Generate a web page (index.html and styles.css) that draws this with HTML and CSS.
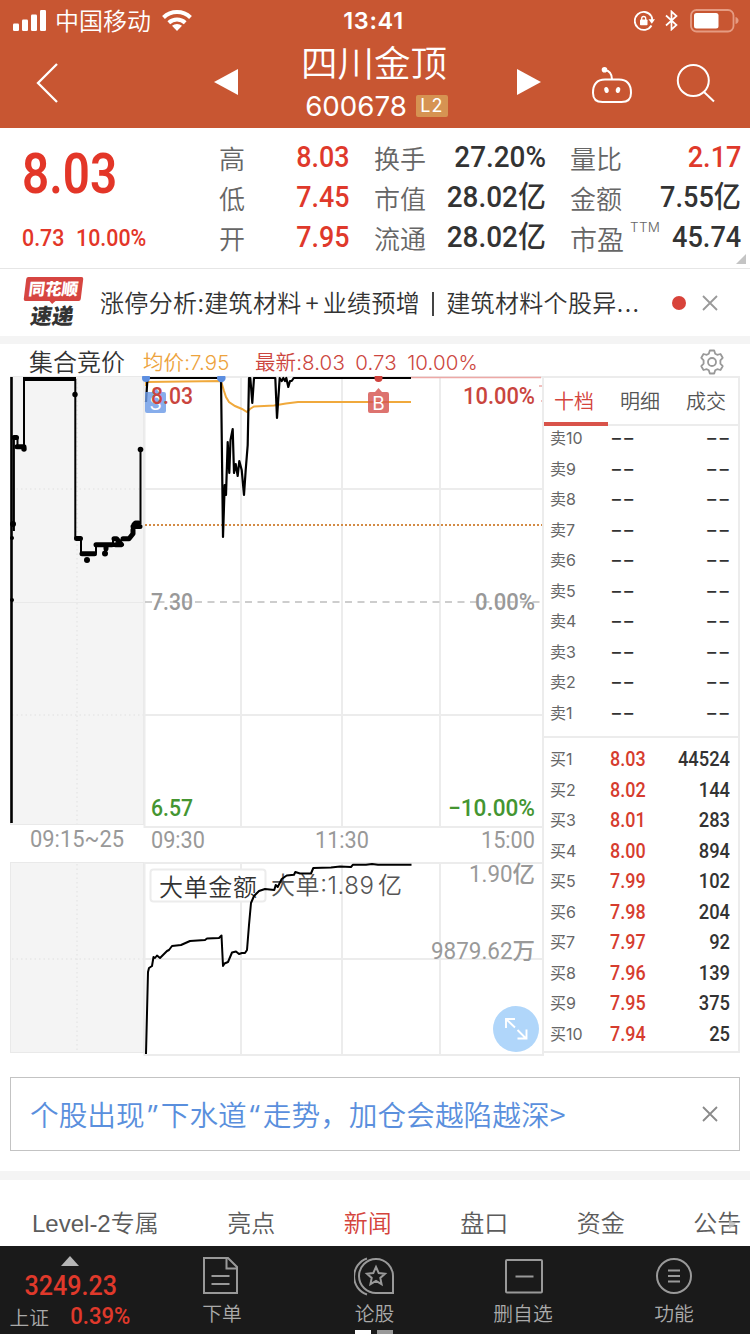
FILE: index.html
```html
<!DOCTYPE html>
<html lang="zh-CN">
<head>
<meta charset="utf-8">
<title>四川金顶 600678</title>
<link rel="stylesheet" href="styles.css">
</head>
<body>
<div class="app">
  <header class="top">
    <div class="status">
      <div class="carrier">
        <svg class="signal" width="34" height="22" viewBox="0 0 34 22" fill="#fff"><rect x="0" y="13.5" width="6" height="7.5" rx="1.2"/><rect x="9" y="9.5" width="6" height="11.500" rx="1.200"/><rect x="18" y="4.500" width="6" height="16.500" rx="1.200"/><rect x="27" y="0" width="6" height="21" rx="1.200"/></svg>
        <span class="operator">中国移动</span>
        <svg class="wifi" width="30" height="23" viewBox="0 0 30 23" fill="none" stroke="#fff" stroke-width="4"><path d="M1.500 8.500a19.500 19.500 0 0 1 27 0"/><path d="M6.800 13.700a12 12 0 0 1 16.400 0"/><path d="M10 16.800a7.500 7.500 0 0 1 10 0L15 22z" fill="#fff" stroke="none"/></svg>
      </div>
      <span class="clock">13:41</span>
      <div class="indicators">
        <svg width="22" height="20" viewBox="0 0 22 20" fill="none" stroke="#fff" stroke-width="1.800"><path d="M17.300 5A9 9 0 1 0 17.500 14.500"/><path d="M14.500 8.300h6.500l-3.200 4.500z" fill="#fff" stroke="none"/><path d="M17.300 5q1 2 .8 4"/><rect x="6" y="8.500" width="7.500" height="5.800" rx=".8" fill="#fff" stroke="none"/><path d="M7.700 9V7.500a2 2 0 0 1 4 0V9" stroke-width="1.300"/></svg>
        <svg width="13" height="21" viewBox="0 0 13 21" fill="none" stroke="#fff" stroke-width="1.700"><path d="M1 5.500l10.500 9.500L6.500 19.500V1.500l5 4.500L1 15.500"/></svg>
        <svg class="battery" width="49" height="24" viewBox="0 0 49 24" fill="none"><rect x="1" y="1" width="42.500" height="21.500" rx="5.500" stroke="#e59b82" stroke-width="1.800"/><rect x="4" y="4" width="24.500" height="15.500" rx="2.500" fill="#fff"/><path d="M45.500 8v7q3-1 3-3.500t-3-3.500z" fill="#e59b82"/></svg>
      </div>
    </div>
    <nav class="titlebar">
      <svg class="back" width="24" height="42" viewBox="0 0 24 42" fill="none" stroke="#fff" stroke-width="2.300"><path d="M22 2L3 21l19 19"/></svg>
      <svg class="prev" width="24" height="26" viewBox="0 0 24 26" fill="#fff"><path d="M0 13L24 0v26z"/></svg>
      <div class="title">
        <div class="name">四川金顶</div>
        <div class="code"><span>600678</span><i class="level">L2</i></div>
      </div>
      <svg class="next" width="24" height="26" viewBox="0 0 24 26" fill="#fff"><path d="M24 13L0 0v26z"/></svg>
      <svg class="robot" width="42" height="38" viewBox="0 0 42 38" fill="none" stroke="#fff" stroke-width="2"><path d="M14 13.500h14q12 0 12 13.500q0 9-9.500 9h-19Q2 36 2 27q0-13.500 12-13.500z"/><path d="M21 13.500q0-8.500-7.500-9.500"/><circle cx="13.500" cy="3.800" r="2.800" fill="#fff" stroke="none"/><ellipse cx="15.500" cy="24" rx="2.200" ry="3" fill="#fff" stroke="none" transform="rotate(-12 15.500 24)"/><ellipse cx="27" cy="24" rx="2.200" ry="3" fill="#fff" stroke="none" transform="rotate(12 27 24)"/></svg>
      <svg class="search" width="40" height="40" viewBox="0 0 40 40" fill="none" stroke="#fff" stroke-width="2"><circle cx="17.300" cy="17.500" r="15.500"/><path d="M28 29l10 9.500"/></svg>
    </nav>
  </header>

  <section class="quote">
    <div class="price">
      <div class="last"><b class="din">8.03</b></div>
      <div class="change"><b class="din">0.73</b><b class="din">10.00%</b></div>
    </div>
    <dl class="stats first">
      <dt>高</dt><dd class="red"><b class="din">8.03</b></dd>
      <dt>低</dt><dd class="red"><b class="din">7.45</b></dd>
      <dt>开</dt><dd class="red"><b class="din">7.95</b></dd>
    </dl>
    <dl class="stats second">
      <dt>换手</dt><dd><b class="din">27.20%</b></dd>
      <dt>市值</dt><dd><b class="din">28.02亿</b></dd>
      <dt>流通</dt><dd><b class="din">28.02亿</b></dd>
    </dl>
    <dl class="stats third">
      <dt>量比</dt><dd class="red"><b class="din">2.17</b></dd>
      <dt>金额</dt><dd><b class="din">7.55亿</b></dd>
      <dt class="pe">市盈<sup>TTM</sup></dt><dd><b class="din">45.74</b></dd>
    </dl>
    <i class="corner"></i>
  </section>

  <section class="notice">
    <div class="brand"><span class="bubble">同花顺</span><span class="express">速递</span></div>
    <p>涨停分析:建筑材料<span class="plus">+</span>业绩预增<span class="bar"></span>建筑材料个股异<span class="dots">...</span></p>
    <i class="unread"></i>
    <svg class="close" width="16" height="16" viewBox="0 0 16 16" stroke="#999" stroke-width="1.800"><path d="M1 1l14 14M15 1L1 15"/></svg>
  </section>

  <section class="market">
    <div class="legend">
      <span class="auction">集合竞价</span>
      <span class="avg">均价:7.95</span>
      <span class="latest">最新:8.03&ensp;0.73&ensp;10.00%</span>
      <svg class="gear" width="26" height="26" viewBox="0 0 26 26" fill="none" stroke="#999" stroke-width="1.800"><path d="M10.800 1.500h4.400l1 3.200 2 1.100 3.300-.8 2.200 3.800-2.300 2.500v3.400l2.300 2.500-2.200 3.800-3.300-.8-2 1.100-1 3.200h-4.400l-1-3.200-2-1.100-3.300.8-2.200-3.800 2.300-2.500v-3.400L2.300 8.800 4.500 5l3.300.8 2-1.100z" stroke-linejoin="round"/><circle cx="13" cy="13" r="4"/></svg>
    </div>
    <div class="panels">
      <svg class="chart" width="534" height="680" viewBox="10 376 534 680">
        <g fill="#f4f4f4" stroke="#e9e9e9"><rect x="10.500" y="376.500" width="133" height="448"/><rect x="10.500" y="862.500" width="133" height="190"/></g>
        <g stroke="#e6e6e6" stroke-width="1.500" stroke-dasharray="1.500 3"><path d="M12 489h131M12 715h131M12 959h131M77 378v446M77 864v188"/></g>
        <path d="M12 602.500h131" stroke="#e9e9e9"/>
        <g stroke="#ececec" stroke-width="2" fill="none"><path d="M144 377h400M144 489h400M144 715h400M144 827h400M144 863h400M144 959h400M144 1055h400M144.500 376v452M241 376v451M342 376v451M440 376v451M144.500 863v193M241 863v192M342 863v192M440 863v192M543 376v452M543 862v193"/></g>
        <path d="M145 602h398" stroke="#bdbdbd" stroke-width="1.500" stroke-dasharray="7 5.500"/>
        <path d="M145 525h398" stroke="#d38b45" stroke-width="1.800" stroke-dasharray="2 2"/>
        <g class="ink">
          <path d="M11.500 377v446" stroke-width="2.600"/><path d="M13.800 437v94" stroke-width="2.200"/>
          <path d="M17.500 437v9M24 449v-70M75.300 379v159M81 538v15M96 553v-9M105 545v8M113 545v-6M140.500 524v-74" stroke-width="2"/>
          <path d="M23 379h53" stroke-width="4"/>
          <path d="M14 437.500h2.500M17 446.700h7M76.500 538.500h4M82 553.700h12.500M96 544.700h16M106 544.700v4M114 538.700h2.500l5 6h-6M123 538.700h6l4-5v-4M134 524.500l1.500-1.500h3M133 526.500h7" stroke-width="5" stroke-linecap="round" stroke-linejoin="round"/>
        </g>
        <g fill="#000"><circle cx="24" cy="449" r="2.700"/><circle cx="75" cy="394.500" r="2.700"/><circle cx="87" cy="560" r="3"/><circle cx="105" cy="553.500" r="3"/><circle cx="140.500" cy="449.500" r="2.800"/><circle cx="13" cy="524" r="3"/><circle cx="12" cy="538" r="2"/><circle cx="12" cy="600" r="2"/></g>
        <path d="M146 386V382l75-1 3 10 2 6 3 5 6 4 7 3 5 3 3-3 4-2.500 20-1 12-2 12-1.500H411" stroke="#f0a93c" stroke-width="2" fill="none"/>
        <path d="M411 377.500h130M539 386h5M541 401h3" stroke="#eda9a6" stroke-width="1.500"/>
        <path class="ink" stroke-width="2.200" stroke-linejoin="round" d="M146 402L147.500 378H221L223 537 224.700 485 226 495 227.700 442 229.300 473 230.500 440 232.700 429 234 473 235.700 464 237.700 476 239.300 461 241.700 470 244 495 245.700 470 247.700 445 249 378H250.300L252.300 403 254 378H275.300L277 418 279.700 378 281.700 381 283.300 378 285 381 286.300 378 288.300 387 290 381H291.700L293.700 378H411"/>
        <path d="M145 392h7l3.500-4 3.500 4h5q2 0 2 2v17q0 2-2 2H147q-2 0-2-2z" fill="#6c9be6" opacity=".82"/>
        <path d="M370 392h5l3.500-4 3.500 4h5q2 0 2 2v17q0 2-2 2H370q-2 0-2-2v-17q0-2 2-2z" fill="#d6544f" opacity=".82"/>
        <g class="flag"><text x="155.500" y="410" text-anchor="middle">S</text><text x="378.500" y="410" text-anchor="middle">B</text></g>
        <circle cx="146" cy="378" r="4" fill="#5c8ee0"/><circle cx="221.300" cy="378" r="4.300" fill="#5c8ee0"/><circle cx="378.500" cy="378" r="4" fill="#cf423d"/>
        <g class="axis">
          <g fill="#c9453e"><text x="151" y="404" textLength="42" lengthAdjust="spacingAndGlyphs">8.03</text><text x="463" y="404" textLength="72" lengthAdjust="spacingAndGlyphs">10.00%</text></g>
          <g fill="#449531"><text x="151" y="816" textLength="42" lengthAdjust="spacingAndGlyphs">6.57</text><text x="448" y="816" textLength="87" lengthAdjust="spacingAndGlyphs">−10.00%</text></g>
          <g fill="#999"><text x="151" y="610" textLength="42" lengthAdjust="spacingAndGlyphs">7.30</text><text x="475" y="610" textLength="60" lengthAdjust="spacingAndGlyphs">0.00%</text></g>
          <g fill="#999" class="thin"><text x="30" y="847" textLength="94" lengthAdjust="spacingAndGlyphs">09:15~25</text><text x="151" y="848" textLength="54" lengthAdjust="spacingAndGlyphs">09:30</text><text x="315" y="848" textLength="54" lengthAdjust="spacingAndGlyphs">11:30</text><text x="481" y="848" textLength="54" lengthAdjust="spacingAndGlyphs">15:00</text><text x="469" y="882" textLength="66" lengthAdjust="spacingAndGlyphs">1.90亿</text><text x="431" y="959" textLength="104" lengthAdjust="spacingAndGlyphs">9879.62万</text></g>
        </g>
        <rect x="150.500" y="869.500" width="115" height="32" rx="3" fill="#fff" stroke="#ececec" stroke-width="2"/>
        <text class="label" x="159" y="895.500" textLength="98">大单金额</text>
        <text class="label soft" x="271" y="893.500" textLength="103">大单:1.89</text>
        <text class="label soft" x="378" y="893.500">亿</text>
        <path class="ink" stroke-width="2" stroke-linejoin="round" d="M146 1054L148 972 149 968 152 966 153.500 957 155 958 157 955.500 160 958 163 955 167 951 169 950 172 946 181 945 190 941 205 940 207 938.500 219 938 221.500 935.500 223 966 224.500 963.500 228 962 232 952.500 236 951.500 239 954 242 953 245 953 247 950 249 925 251 903 254 896 259 891 265 889 274.300 890 275.700 885 277.700 887 281.700 879 286.700 875.500 294 874.700 295.300 872 300 873.500H311L313.300 868 331 867.500 340 866.500 351 867 353 864.700H366L372 864 378 864.700H411.500"/>
        <circle cx="516" cy="1029" r="23" fill="#b0d6fa"/>
        <path d="M506 1028v-9h9M506 1019l9 8.500M517.500 1030l8.500 8.500M526.500 1029.500v9h-9" fill="none" stroke="#fff" stroke-width="1.900"/>
      </svg>
      <div class="book">
        <div class="booktabs"><span class="on">十档</span><span>明细</span><span>成交</span></div>
        <div class="orders sell">
          <div class="row"><span>卖10</span><b class="none">--</b><b class="none">--</b></div>
          <div class="row"><span>卖9</span><b class="none">--</b><b class="none">--</b></div>
          <div class="row"><span>卖8</span><b class="none">--</b><b class="none">--</b></div>
          <div class="row"><span>卖7</span><b class="none">--</b><b class="none">--</b></div>
          <div class="row"><span>卖6</span><b class="none">--</b><b class="none">--</b></div>
          <div class="row"><span>卖5</span><b class="none">--</b><b class="none">--</b></div>
          <div class="row"><span>卖4</span><b class="none">--</b><b class="none">--</b></div>
          <div class="row"><span>卖3</span><b class="none">--</b><b class="none">--</b></div>
          <div class="row"><span>卖2</span><b class="none">--</b><b class="none">--</b></div>
          <div class="row"><span>卖1</span><b class="none">--</b><b class="none">--</b></div>
        </div>
        <div class="orders buy">
          <div class="row"><span>买1</span><b class="bid">8.03</b><b>44524</b></div>
          <div class="row"><span>买2</span><b class="bid">8.02</b><b>144</b></div>
          <div class="row"><span>买3</span><b class="bid">8.01</b><b>283</b></div>
          <div class="row"><span>买4</span><b class="bid">8.00</b><b>894</b></div>
          <div class="row"><span>买5</span><b class="bid">7.99</b><b>102</b></div>
          <div class="row"><span>买6</span><b class="bid">7.98</b><b>204</b></div>
          <div class="row"><span>买7</span><b class="bid">7.97</b><b>92</b></div>
          <div class="row"><span>买8</span><b class="bid">7.96</b><b>139</b></div>
          <div class="row"><span>买9</span><b class="bid">7.95</b><b>375</b></div>
          <div class="row"><span>买10</span><b class="bid">7.94</b><b>25</b></div>
        </div>
      </div>
    </div>
  </section>

  <section class="promo">
    <p>个股出现<span class="mark">”</span>下水道<span class="mark">“</span>走势，加仓会越陷越深&gt;</p>
    <svg width="16" height="16" viewBox="0 0 16 16" stroke="#8a8a8a" stroke-width="1.800"><path d="M1 1l14 14M15 1L1 15"/></svg>
  </section>

  <nav class="news">
    <span>Level-2专属</span><span>亮点</span><span class="on">新闻</span><span>盘口</span><span>资金</span><span class="more">公告</span>
  </nav>

  <footer class="dock">
    <div class="index"><i class="up"></i><b class="points">3249.23</b><div class="sub"><span>上证</span><b>0.39%</b></div></div>
    <div class="tab"><svg class="doc" width="40" height="40" viewBox="0 0 40 40"><path d="M3 2h24l9 9v26H3zM25.500 2v10.500h10M10.500 20h18M10.500 28h18"/></svg><span>下单</span></div>
    <div class="tab forum"><svg width="42" height="40" viewBox="0 0 42 40"><path d="M39 37H22.500A17 17 0 1 1 39 20.500zM13 2.500a19 19 0 0 0 0 36"/><path d="M22 11l2.700 6 6.300.7-4.700 4.200 1.300 6.300-5.600-3.200-5.600 3.200 1.300-6.300-4.700-4.200 6.300-.7z"/></svg><span>论股</span></div>
    <div class="tab"><svg width="40" height="40" viewBox="0 0 40 40"><rect x="3" y="4" width="36" height="32.500" rx="1"/><path d="M12.500 20.500h18"/></svg><span>删自选</span></div>
    <div class="tab"><svg width="40" height="40" viewBox="0 0 40 40"><circle cx="20" cy="20" r="17"/><path d="M14 14.500h12M14 20h12M14 25.500h12"/></svg><span>功能</span></div>
    <div class="pager"><i></i><i></i></div>
  </footer>
</div>
</body>
</html>
```
FILE: styles.css
```css
* { box-sizing: border-box; }
body { margin: 0; background: #fff; color: #333; font-family: Inter, "Noto Sans CJK SC", sans-serif; }
p, dl, dd { margin: 0; }
b, i, em { font-style: normal; font-weight: 500; }
svg { display: block; flex: none; }
.app { width: 750px; height: 1334px; display: flex; flex-direction: column; overflow: hidden; position: relative; }
.din { display: inline-block; font-family: Roboto, "Noto Sans CJK SC", sans-serif; transform: scaleX(.92); transform-origin: left center; white-space: nowrap; }
.red { color: #df392b; }

/* header */
.top { height: 128px; background: #c85632; color: #fff; }
.status { height: 40px; display: grid; grid-template-columns: 1fr auto 1fr; align-items: center; padding: 0 11px 0 13px; }
.carrier { display: flex; align-items: center; }
.operator { margin: -2px 0 0 8px; font: 350 24px/36px "Noto Sans CJK SC", sans-serif; }
.wifi { margin-left: 11px; }
.clock { margin: 1px 5px 0 0; font-size: 23.500px; font-weight: 600; line-height: 40px; letter-spacing: .7px; }
.indicators { display: flex; align-items: center; justify-content: flex-end; gap: 11px; }
.indicators svg:first-child { margin-right: -2px; }
.battery { margin-left: 1px; }
.titlebar { display: flex; height: 88px; align-items: flex-start; }
.back { margin: 22px 0 0 35px; }
.prev { margin: 29px 0 0 155px; }
.title { width: 280px; display: flex; flex-direction: column; align-items: center; }
.name { margin: 0 8px 0 0; font: 350 36.500px/44px "Noto Sans CJK SC", sans-serif; }
.code { display: flex; align-items: center; gap: 9px; height: 44px; margin-right: 3px; font-size: 27.700px; }
.level { width: 32px; height: 22px; border-radius: 2px; background: #d69352; font-size: 18px; font-weight: 400; line-height: 22px; text-align: center; letter-spacing: 1px; }
.next { margin: 29px 0 0 -1px; }
.robot { margin: 26px 0 0 50px; }
.search { margin: 23px 0 0 43px; }

/* quote */
.quote { height: 141px; border-bottom: 1px solid #e6e6e6; display: flex; position: relative; padding-top: 9px; }
.price { width: 219px; padding-left: 22px; color: #e33628; }
.last { height: 76px; font-size: 55px; line-height: 72px; }
.last .din { transform: scaleX(.865); font-weight: 600; }
.change { display: flex; font-size: 23.500px; line-height: 50px; }
.change .din { width: 54px; transform: scaleX(.91); }
.stats { display: grid; grid-template-columns: auto auto; justify-content: space-between; grid-auto-rows: 40px; line-height: 38px; }
.stats dt { color: #666; font: 350 26px/41px "Noto Sans CJK SC", sans-serif; white-space: nowrap; }
.stats dt.pe { font-size: 27px; line-height: 44px; }
.stats dd { font-size: 29.500px; text-align: right; }
.stats dd .din { transform-origin: right center; }
.first .din { transform: scaleX(.91); }
.second .din { transform: scaleX(.945); }
.first { width: 130px; }
.second { width: 172px; margin-left: 25px; }
.third { width: 171px; margin-left: 24px; grid-template-columns: 54px 117px; }
.stats sup { font: 300 13.500px/14px Inter, sans-serif; letter-spacing: .3px; vertical-align: 18px; margin-left: 6px; }
.corner { position: absolute; right: 4px; bottom: 4px; border-left: 10px solid transparent; border-bottom: 10px solid #c4c4c4; }

/* notice */
.notice { height: 75px; border-bottom: 8px solid #f4f4f4; display: flex; align-items: center; padding-left: 24px; }
.brand { width: 60px; height: 52px; margin-top: -1px; }
.bubble { display: block; height: 24px; margin: 1px 2px 0 1px; border-radius: 2px; background: #d64541; color: #fff; transform: skewX(-7deg); text-align: center; font: 900 16.500px/23px "Noto Sans CJK SC", sans-serif; }
.bubble::after { content: ""; display: block; width: 0; margin: 0 auto; border: 4px solid transparent; border-top-color: #d64541; border-bottom: 0; }
.express { display: block; padding-left: 7px; font: 900 21.500px/27px "Noto Sans CJK SC", sans-serif; transform: skewX(-9deg); }
.notice p { width: 560px; margin: -2px 0 0 16px; font: 350 24px/36px "Noto Sans CJK SC", sans-serif; letter-spacing: .36px; white-space: nowrap; }
.plus { display: inline-block; width: 21px; text-align: center; }
.bar { display: inline-block; width: 2px; height: 24px; margin: 0 12px 0 12px; background: #444; vertical-align: -4px; }
.dots { letter-spacing: 1.500px; }
.unread { width: 14px; height: 14px; margin-left: 12px; border-radius: 50%; background: #d8433a; }
.close { margin-left: 16px; }

/* market */
.legend { height: 32px; display: flex; align-items: center; padding: 4px 25px 0 0; line-height: 32px; font-size: 20.500px; font-weight: 400; white-space: nowrap; }
.auction, .avg, .latest { padding-top: 2px; }
.auction { width: 114px; padding-left: 29px; box-sizing: content-box; font-size: 24px; font-weight: 350; }
.avg { width: 112px; color: #eda33d; }
.latest { color: #cc4640; }
.legend .avg, .legend .latest { font-family: Inter, "Noto Sans CJK SC", sans-serif; font-weight: 350; letter-spacing: .1px; }
.gear { margin-left: auto; }
.panels { display: flex; height: 681px; }
.chart { margin-left: 10px; }
.ink { fill: none; stroke: #000; }
.axis { font: 500 23px Roboto, "Noto Sans CJK SC", sans-serif; }
.thin { font-weight: 450; }
.flag { font: 400 19px Inter, sans-serif; fill: #fff; }
.label { font: 350 24px Inter, "Noto Sans CJK SC", sans-serif; fill: #333; }
.soft { fill: #555; }
.book { width: 198px; height: 677px; margin-left: -2px; border: 2px solid #ececec; }
.booktabs { display: grid; grid-template-columns: 64px 66px 64px; height: 48px; border-bottom: 2px solid #ececec; text-align: center; font: 350 20px/46px "Noto Sans CJK SC", sans-serif; color: #555; }
.booktabs span { padding-right: 2px; }
.booktabs span:last-child { padding: 0; }
.booktabs .on { padding-right: 4px; color: #d4443c; height: 48px; border-bottom: 4px solid #d9534a; }
.orders { display: flex; flex-direction: column; justify-content: space-between; height: 299px; }
.row { height: 24px; display: grid; grid-template-columns: 60px 40px 1fr; padding: 0 8px 0 6px; line-height: 24px; font-size: 16px; color: #666; }
.row b { font: 500 19.500px/26px Roboto, sans-serif; color: #333; }
.row b:last-child { text-align: right; transform: scaleX(.94); transform-origin: right; }
.row .bid { color: #d63c2e; transform: scaleX(.92); transform-origin: left; }
.row .none, .row .none:last-child { font: 400 20px/24px Inter, sans-serif; letter-spacing: -.4px; transform: scaleX(1.4); transform-origin: left; }
.row .none:last-child { transform-origin: right; }
.sell { height: 299px; }
.buy { margin-top: 11px; border-top: 2px solid #ececec; padding-top: 9px; height: 310px; }

/* promo */
.promo { height: 74px; flex: none; margin: 20px 10px 20px; border: 1px solid #c3c3c3; display: flex; align-items: center; justify-content: space-between; padding: 0 21px 0 19px; }
.promo p { font: 350 28.700px/40px "Noto Sans CJK SC", sans-serif; color: #5a8fdd; white-space: nowrap; }
.mark { display: inline-block; width: 16px; font-family: "Open Sans", sans-serif; font-weight: 400; line-height: 30px; text-align: center; }

/* news tabs */
.news { height: 75px; flex: none; border-top: 9px solid #f4f4f4; display: flex; padding: 22px 0 0 32px; gap: 68.500px; font: 350 24px/44px "Liberation Sans", "Noto Sans CJK SC", sans-serif; color: #5c5c5c; white-space: nowrap; }
.news .on { color: #d4443c; }
.more { position: relative; }
.more::after { content: ""; position: absolute; left: 36px; top: 17px; border: 5px solid transparent; border-left: 7px solid #bbb; opacity: .8; }

/* dock */
.dock { height: 88px; flex: none; background: #1a1a1a; color: #aaa; display: grid; grid-template-columns: 147px 150px 155px 142px 160px; position: relative; font: 350 19.800px/28px "Noto Sans CJK SC", sans-serif; }
.index { display: flex; flex-direction: column; align-items: center; padding-right: 7px; }
.up { margin-top: 10px; border: 9px solid transparent; border-top: 0; border-bottom: 10px solid #b5b5b5; }
.points { margin: 2px 0 -1px 2px; font: 500 27px/36px Roboto, sans-serif; color: #e0392b; transform: scaleX(.93); }
.sub { display: flex; gap: 20px; align-items: center; margin-left: 1px; }
.sub b { font: 500 23px/28px Roboto, sans-serif; color: #e0392b; transform: scaleX(.96); }
.tab { display: flex; flex-direction: column; align-items: center; padding-top: 10px; gap: 3px; }
.tab svg { fill: none; stroke: #999; stroke-width: 2; }
.doc { margin-left: -3px; }
.pager { position: absolute; left: 355px; bottom: 0; display: flex; gap: 6px; }
.pager i { width: 16px; height: 4px; background: #fff; }
.pager i + i { background: #999; }
```
